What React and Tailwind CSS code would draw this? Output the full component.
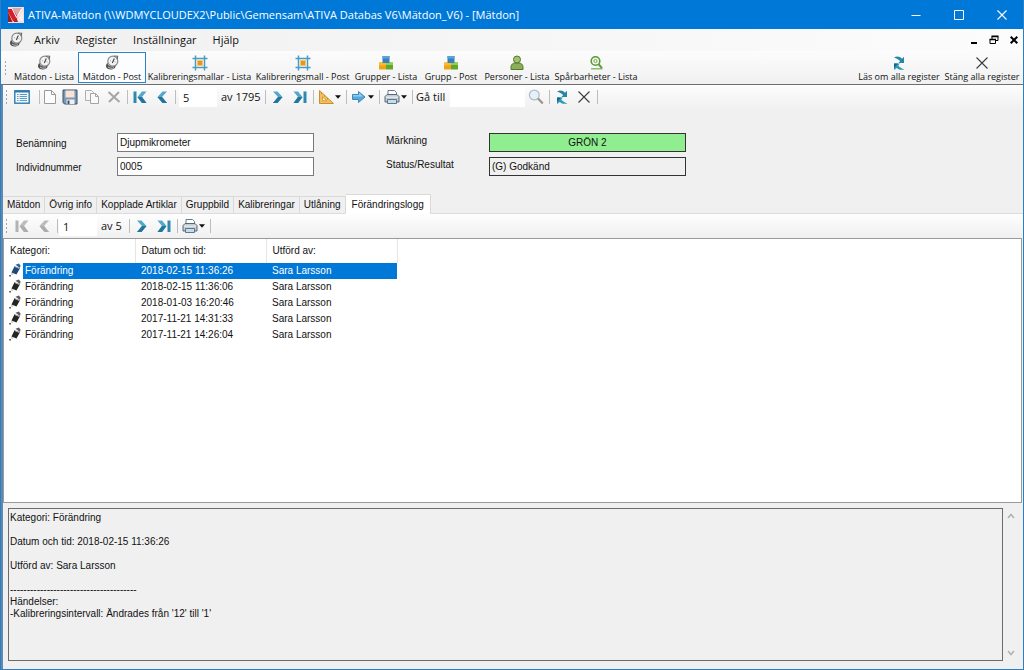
import React from "react";

const UI = "font-['Open_Sans','Noto_Sans',sans-serif]";

/* ---------- icons ---------- */

function Svg({ children, box = "0 0 16 16", className = "h-4 w-4" }) {
  return (
    <svg viewBox={box} className={`shrink-0 ${className}`} fill="none" aria-hidden="true">
      {children}
    </svg>
  );
}

const LogoIcon = () => (
  <Svg className="h-4 w-4">
    <rect width="16" height="16" fill="#f0dedc" />
    <path d="M0 2h7l3 6-2 6H5L0 5z" fill="#cf222b" />
    <path d="M0 5l4.500 10H0z" fill="#a3161d" />
    <path d="M4 1h10l-5 8z" fill="#dca9a8" />
    <path d="M4 1.500l4.500 9L14 1.500" stroke="#fff" />
    <path d="M9 14l6-10v10z" fill="#f6efee" />
    <path d="M5.500 15l3-4 1.500 4z" fill="#b91c23" />
  </Svg>
);

const GaugeIcon = () => (
  <Svg>
    <circle cx="8.800" cy="6.200" r="5" fill="#f3f3f3" stroke="#8a8a8a" strokeWidth="1.200" />
    <path d="M10 1l3.600.2-.3 3" stroke="#6d6d6d" strokeWidth="1.200" />
    <path d="M8.300 8l2-4.500" stroke="#444" strokeWidth="1.100" />
    <path d="M6 5.500l.8.5M11.500 7l-.9-.3" stroke="#888" strokeWidth=".8" />
    <path d="M3.500 7.500c-.2 2.600 2.600 4.800 6.600 4l1.400-1c.4 2-1.300 3.800-4 4-2.800.2-5.200-1-5.500-3-.1-1.500.6-2.900 1.500-4z" fill="#4f4f4f" />
    <path d="M4 12c1.500 1.200 4 1.600 6 .8" stroke="#d7d7d7" strokeWidth=".9" />
  </Svg>
);

const FrameIcon = () => (
  <Svg>
    <path d="M3.500.5v15M12.500.5v15M.5 3.500h15M.5 12.500h15" stroke="#479cc4" strokeWidth="1.500" />
    <rect x="5.500" y="5.500" width="5" height="5" fill="#e8951e" stroke="#f7c66f" />
  </Svg>
);

const BlocksIcon = () => (
  <Svg>
    <rect x="1" y="7.500" width="7" height="7" rx=".5" fill="#f0a21c" />
    <rect x="8" y="7.500" width="7" height="7" rx=".5" fill="#62a62a" />
    <path d="M1 7.500h7v3H1z" fill="#f5bd2f" />
    <path d="M8 7.500h7V10H8z" fill="#9aca4f" />
    <rect x="4.500" y="1" width="7" height="7" rx=".5" fill="#3681bd" />
    <rect x="4.500" y="1" width="7" height="2.500" fill="#5fa3d2" />
  </Svg>
);

const PersonIcon = () => (
  <Svg>
    <path d="M2 14.500V12c0-2.500 2-4 4-4h4c2 0 4 1.500 4 4v2.500z" fill="#8bae59" stroke="#55782c" />
    <circle cx="8" cy="4.500" r="3.500" fill="#a2c272" stroke="#55782c" />
  </Svg>
);

const TraceIcon = () => (
  <Svg>
    <circle cx="7.500" cy="6" r="4.300" stroke="#5b9a38" strokeWidth="1.600" fill="#f3f9ee" />
    <circle cx="7.500" cy="6" r="1.600" stroke="#74ab55" />
    <path d="M10.500 9.200l3.500 4" stroke="#5b9a38" strokeWidth="2" />
    <path d="M3 13.800h11.500" stroke="#76ad55" strokeWidth="1.200" />
  </Svg>
);

const RefreshIcon = () => (
  <Svg>
    <path d="M3 2.500c3-1.800 6-1 8 1.200l2-2V8H7.500l1.700-1.900C7.500 4.300 5.500 3.300 3 2.500z" fill="#2687a6" />
    <path d="M13.500 14.500c-3.500.7-6 .2-7.700-1.600L3 15V8.500h6l-1.800 2c1.500 1.800 3.500 3 6.300 4z" fill="#2f9ab8" />
    <path d="M3 8.500h4L3 13z" fill="#176581" />
  </Svg>
);

const ThinXIcon = () => (
  <Svg>
    <path d="M2.500 2.500l11 11M13.500 2.500l-11 11" stroke="#3c3c3c" strokeWidth="1.100" />
  </Svg>
);

const ListFormIcon = () => (
  <Svg>
    <rect x=".8" y="1.800" width="14.400" height="12.400" fill="#f4fafd" stroke="#2c7cb0" strokeWidth="1.400" />
    <path d="M1 2.500h14" stroke="#2c7cb0" strokeWidth="2" />
    <path d="M3 5.500h1.500M3 7.500h1.500M3 9.500h1.500M3 11.500h1.500M5.500 5.500H13M5.500 7.500H13M5.500 9.500H13M5.500 11.500H13" stroke="#5a9cc5" />
  </Svg>
);

const PageIcon = () => (
  <Svg>
    <path d="M2.500 1.500h7l4 4v9h-11z" fill="#fdfdfd" stroke="#9a9a9a" />
    <path d="M9.500 1.500v4h4" stroke="#9a9a9a" />
  </Svg>
);

const SaveIcon = () => (
  <Svg>
    <path d="M1 1h14v14H2.500L1 13.500z" fill="#7c97b5" stroke="#3f5368" />
    <rect x="3.500" y="1.500" width="9" height="7" fill="#f8e3d6" />
    <path d="M4.500 10.500h8V15h-8z" fill="#eef1f4" />
    <path d="M5.500 11.500h2V15h-2z" fill="#3f5368" />
  </Svg>
);

const CopyIcon = () => (
  <Svg>
    <path d="M1.500 1.500h6l2 2v8h-8z" fill="#f6f6f6" stroke="#b0b0b0" />
    <path d="M6.500 4.500h5l3 3v7h-8z" fill="#fafafa" stroke="#a5a5a5" />
    <path d="M11.500 4.500v3h3" stroke="#a5a5a5" />
  </Svg>
);

const GrayXIcon = () => (
  <Svg>
    <path d="M2.500 3l11 10M13 3L3 13" stroke="#a6a6a6" strokeWidth="2" />
  </Svg>
);

const Arrow = ({ flip = false, bar = false, muted = false }) => (
  <Svg className={`h-4 w-4 ${flip ? "-scale-x-100" : ""}`}>
    <path
      d={bar ? "M1.500 2.500H6L10.500 8 6 14H1.500L6 8z" : "M3 2.500h4.500L12.500 8l-5 6H3l5-6z"}
      fill={muted ? "#bcbcbc" : "#55a8c9"}
    />
    <path
      d={bar ? "M6 8h4.500L6 14H1.500z" : "M8 8h4.500l-5 6H3z"}
      fill={muted ? "#adadad" : "#23759b"}
    />
    {bar && <path d="M11.500 2.500h3V14h-3z" fill={muted ? "#b3b3b3" : "#2f88b0"} />}
  </Svg>
);

const RulerIcon = () => (
  <Svg>
    <path d="M1.500 1.500v13h14z" fill="#f3bf5a" stroke="#c98f30" />
    <path d="M4.500 8v3.700h4.200z" fill="#fff" stroke="#c98f30" strokeWidth=".8" />
    <path d="M4 3.800l-1 .8M7 6.500l-1 .9M10 9.300l-1 .9" stroke="#8f6113" strokeWidth=".7" />
  </Svg>
);

const GoIcon = () => (
  <Svg>
    <path d="M1.500 5.500h6V2.500L14 8l-6.500 5.500v-3h-6z" fill="#58a9dd" stroke="#3c88bb" />
    <path d="M2 6h6V3.800l4 3.700H2z" fill="#93cbee" />
  </Svg>
);

const PrintIcon = () => (
  <Svg>
    <path d="M4 6V1.500h6.500l2 2V6" fill="#fff" stroke="#68788a" />
    <path d="M1 7.500l2-2h10l2 2V13H1z" fill="#c3cbd3" stroke="#5b6977" />
    <path d="M3.500 10.500h9v4h-9z" fill="#bfe0f4" stroke="#5b6977" strokeWidth=".9" />
    <path d="M2 8.200h12" stroke="#eef2f5" />
  </Svg>
);

const SearchIcon = () => (
  <Svg>
    <circle cx="6.300" cy="6" r="4.900" fill="#e6f0f7" stroke="#b3bec8" strokeWidth="1.300" />
    <path d="M10 9.500l4.800 5" stroke="#9a9390" strokeWidth="2.200" />
  </Svg>
);

const PencilIcon = ({ selected }) => (
  <Svg className="h-4 w-4">
    <path d="M7.500 1.800L11 .5l1.500 2.300L12 5z" fill={selected ? "#2b628f" : "#5a5a5a"} />
    <path d="M6.500 3.200L12 5.300l-3.500 6.200-5-2z" fill={selected ? "#1c4a73" : "#242424"} />
    <path d="M7 3.800l4.500 1.800" stroke={selected ? "#8fbbe0" : "#d0d0d0"} strokeWidth=".8" />
    <path d="M3.300 10.200l2 .9-1.600.6z" fill="#777" />
    <path d="M1.300 12.800h1.500" stroke={selected ? "#123e66" : "#333"} strokeWidth="1.500" />
  </Svg>
);

const Caret = () => (
  <Svg box="0 0 6 4" className="h-1 w-1.5">
    <path d="M0 .3h6L3 3.700z" fill="#111" />
  </Svg>
);

/* ---------- toolbar parts ---------- */

const Grip = () => (
  <span className="ml-[3px] mr-1 flex shrink-0 flex-col gap-0.5" aria-hidden="true">
    <i className="h-0.5 w-px bg-[#a3a3a3]" />
    <i className="h-0.5 w-px bg-[#a3a3a3]" />
    <i className="h-0.5 w-px bg-[#a3a3a3]" />
    <i className="h-0.5 w-px bg-[#a3a3a3]" />
  </span>
);

const Sep = () => (
  <span className="flex w-1 shrink-0 justify-center" aria-hidden="true">
    <i className="h-3.5 w-px bg-[#bdbdbd]" />
  </span>
);

const Tool = ({ label, children, disabled, width = "w-[22px]" }) => (
  <button type="button" aria-label={label} disabled={disabled} className={`flex h-5 shrink-0 items-center justify-center ${width}`}>
    {children}
  </button>
);

const DropTool = ({ label, children }) => (
  <button type="button" aria-label={label} className="flex h-5 w-[29px] shrink-0 items-center justify-center gap-px">
    {children}
    <Caret />
  </button>
);

const BigTool = ({ icon, label, active, width }) => (
  <button
    type="button"
    className={`flex h-[31px] shrink-0 flex-col items-center border pt-0.5 ${width} ${
      active ? "border-[#2a84c9] bg-[#fbfdff]" : "border-transparent"
    }`}
  >
    {icon}
    <span className="whitespace-nowrap text-[9px] leading-3">{label}</span>
  </button>
);

/* ---------- data ---------- */

const registers = [
  { icon: <GaugeIcon />, label: "Mätdon - Lista", width: "w-[68px]" },
  { icon: <GaugeIcon />, label: "Mätdon - Post", active: true, width: "w-[68px]" },
  { icon: <FrameIcon />, label: "Kalibreringsmallar - Lista", width: "w-[107px]" },
  { icon: <FrameIcon />, label: "Kalibreringsmall - Post", width: "w-[99px]" },
  { icon: <BlocksIcon />, label: "Grupper - Lista", width: "w-[68px]" },
  { icon: <BlocksIcon />, label: "Grupp - Post", width: "w-[62px]" },
  { icon: <PersonIcon />, label: "Personer - Lista", width: "w-[70px]" },
  { icon: <TraceIcon />, label: "Spårbarheter - Lista", width: "w-[88px]" },
];

const tabs = ["Mätdon", "Övrig info", "Kopplade Artiklar", "Gruppbild", "Kalibreringar", "Utlåning", "Förändringslogg"];

const log = [
  "2018-02-15 11:36:26",
  "2018-02-15 11:36:06",
  "2018-01-03 16:20:46",
  "2017-11-21 14:31:33",
  "2017-11-21 14:26:04",
];

const details = `Kategori: Förändring

Datum och tid: 2018-02-15 11:36:26

Utförd av: Sara Larsson

--------------------------------------
Händelser:
-Kalibreringsintervall: Ändrades från '12' till '1'`;

const fieldClass = "h-[19px] w-[197px] border px-0.5";

export default function App() {
  return (
    <div className="flex min-h-screen flex-col border-x border-b border-[#2f7fc0] bg-[#f0f0f0] font-['Liberation_Sans',Arial,sans-serif] text-[10px] leading-4 text-[#111]">
      <header className={`flex h-[29px] items-center bg-[#0078d7] text-white ${UI}`}>
        <span className="ml-[7px] mr-1"><LogoIcon /></span>
        <h1 className="text-[11px] leading-4">ATIVA-Mätdon (\\WDMYCLOUDEX2\Public\Gemensam\ATIVA Databas V6\Mätdon_V6) - [Mätdon]</h1>
        <div className="ml-auto flex">
          <button type="button" aria-label="Minimera" className="flex h-7 w-[42px] items-center justify-center">
            <Svg box="0 0 10 10" className="h-2.5 w-2.5"><path d="M.5 5.500h9" stroke="#fff" /></Svg>
          </button>
          <button type="button" aria-label="Maximera" className="flex h-7 w-[43px] items-center justify-center">
            <Svg box="0 0 10 10" className="h-2.5 w-2.5"><path d="M.5.5h9v9h-9z" stroke="#fff" /></Svg>
          </button>
          <button type="button" aria-label="Stäng" className="flex h-7 w-[43px] items-center justify-center">
            <Svg box="0 0 10 10" className="h-2.5 w-2.5"><path d="M.5.5l9 9M9.500.5l-9 9" stroke="#fff" strokeWidth="1.100" /></Svg>
          </button>
        </div>
      </header>

      <nav className={`flex h-[22px] items-center bg-gradient-to-r from-[#f0f0f0] to-[#fcfcfc] text-[11px] ${UI}`}>
        <span className="ml-[7px] mr-2.5"><GaugeIcon /></span>
        <div className="flex gap-4">
          <button type="button">Arkiv</button>
          <button type="button">Register</button>
          <button type="button">Inställningar</button>
          <button type="button">Hjälp</button>
        </div>
        <div className="ml-auto flex items-center gap-[11px] pr-[5px]">
          <button type="button" aria-label="Minimera fönster">
            <Svg box="0 0 8 10" className="h-2.5 w-2"><path d="M1 8h6" stroke="#000" strokeWidth="2" /></Svg>
          </button>
          <button type="button" aria-label="Återställ fönster">
            <Svg box="0 0 10 10" className="h-2.5 w-2.5">
              <path d="M1 4.500h5.500v4H1zM3 4V1.500h6v4H7" stroke="#000" />
              <path d="M.5 4.500h6.500M2.500 1.300h7" stroke="#000" strokeWidth="1.700" />
            </Svg>
          </button>
          <button type="button" aria-label="Stäng fönster">
            <Svg box="0 0 8 8" className="h-2 w-2"><path d="M.7.7l6.600 6.600M7.300.7L.7 7.300" stroke="#000" strokeWidth="2" /></Svg>
          </button>
        </div>
      </nav>

      <div className={`flex h-[34px] items-center border-b border-[#6f6f6f] bg-gradient-to-b from-[#fcfcfc] to-[#f1f1f1] px-px ${UI}`}>
        <Grip />
        {registers.map((r) => <BigTool key={r.label} {...r} />)}
        <div className="ml-auto flex">
          <BigTool icon={<RefreshIcon />} label="Läs om alla register" width="w-[86px]" />
          <BigTool icon={<ThinXIcon />} label="Stäng alla register" width="w-[80px]" />
        </div>
      </div>

      <main className="flex flex-1 flex-col border-l-2 border-[#5e89b0]">
        <div className={`flex h-6 items-center bg-gradient-to-b from-[#fdfdfd] to-[#f0f0f0] text-[11px] ${UI}`}>
          <Grip />
          <Tool label="Visa lista"><ListFormIcon /></Tool>
          <span className="ml-1 flex"><Sep /></span>
          <Tool label="Ny" width="w-[18px]"><PageIcon /></Tool>
          <Tool label="Spara"><SaveIcon /></Tool>
          <Tool label="Kopiera"><CopyIcon /></Tool>
          <Tool label="Ta bort"><GrayXIcon /></Tool>
          <Sep />
          <Tool label="Första post"><Arrow flip bar /></Tool>
          <Tool label="Föregående post"><Arrow flip /></Tool>
          <Sep />
          <input aria-label="Post" defaultValue="5" className="ml-0.5 h-5 w-[38px] bg-white px-1" />
          <span className="w-[46px] whitespace-nowrap pl-1">av 1795</span>
          <Sep />
          <Tool label="Nästa post"><Arrow /></Tool>
          <Tool label="Sista post"><Arrow bar /></Tool>
          <Sep />
          <DropTool label="Mätning"><RulerIcon /></DropTool>
          <Sep />
          <DropTool label="Gå vidare"><GoIcon /></DropTool>
          <Sep />
          <DropTool label="Skriv ut"><PrintIcon /></DropTool>
          <Sep />
          <label htmlFor="goto" className="w-9 whitespace-nowrap pl-0.5">Gå till</label>
          <input id="goto" className="h-5 w-[75px] bg-white px-1" />
          <Tool label="Sök"><SearchIcon /></Tool>
          <Sep />
          <Tool label="Uppdatera"><RefreshIcon /></Tool>
          <Tool label="Stäng post"><ThinXIcon /></Tool>
          <Sep />
        </div>

        <form className="flex pb-[18px] pl-[13px] pt-6" onSubmit={(e) => e.preventDefault()}>
          <div className="grid grid-cols-[101px_auto] items-end gap-y-[5px]">
            <label htmlFor="name">Benämning</label>
            <input id="name" defaultValue="Djupmikrometer" className={`${fieldClass} border-[#7a7a7a] bg-white`} />
            <label htmlFor="number">Individnummer</label>
            <input id="number" defaultValue="0005" className={`${fieldClass} border-[#7a7a7a] bg-white`} />
          </div>
          <div className="ml-[72px] grid grid-cols-[103px_auto] gap-y-[5px]">
            <label htmlFor="mark">Märkning</label>
            <input id="mark" readOnly defaultValue="GRÖN 2" className={`${fieldClass} border-[#333] bg-[#90ee90] text-center`} />
            <label htmlFor="status">Status/Resultat</label>
            <input id="status" readOnly defaultValue="(G) Godkänd" className={`${fieldClass} border-[#333] bg-[#f0f0f0]`} />
          </div>
        </form>

        <div role="tablist" className="flex items-end border-b border-[#dcdcdc]">
          {tabs.map((t, i) => {
            const on = i === tabs.length - 1;
            return (
              <button
                key={t}
                type="button"
                role="tab"
                aria-selected={on}
                className={`whitespace-nowrap border-r border-t border-[#d9d9d9] ${
                  on ? "-mb-px h-[20px] bg-white px-1.5" : "h-[17px] bg-[#f0f0f0] px-1"
                }`}
              >
                {t}
              </button>
            );
          })}
        </div>

        <div className={`flex h-6 items-center bg-gradient-to-b from-[#fefefe] to-[#f0f0f0] text-[11px] ${UI}`}>
          <Grip />
          <Tool label="Första rad" disabled><Arrow flip bar muted /></Tool>
          <Tool label="Föregående rad" disabled><Arrow flip muted /></Tool>
          <Sep />
          <input aria-label="Rad" defaultValue="1" className="h-5 w-[38px] bg-white px-1" />
          <span className="w-[30px] whitespace-nowrap pl-1">av 5</span>
          <Sep />
          <Tool label="Nästa rad"><Arrow /></Tool>
          <Tool label="Sista rad"><Arrow bar /></Tool>
          <Sep />
          <DropTool label="Skriv ut logg"><PrintIcon /></DropTool>
          <Sep />
        </div>

        <section className="mr-px flex-1 border border-[#9a9a9a] bg-white">
          <table className="w-[393px] table-fixed border-collapse text-left">
            <thead>
              <tr className="h-6">
                <th className="w-[131px] border-r border-[#e5e5e5] py-0 pl-1.5 font-normal">Kategori:</th>
                <th className="w-[131px] border-r border-[#e5e5e5] py-0 pl-1.5 font-normal">Datum och tid:</th>
                <th className="w-[131px] border-r border-[#e5e5e5] py-0 pl-1.5 font-normal">Utförd av:</th>
              </tr>
            </thead>
            <tbody>
              {log.map((time, i) => {
                const hit = i === 0 ? "bg-[#0078d7] text-white" : "";
                return (
                  <tr key={time} className="h-4">
                    <td className="p-0">
                      <div className="flex">
                        <span className="w-[19px] pl-1"><PencilIcon selected={i === 0} /></span>
                        <span className={`flex-1 pl-0.5 ${hit}`}>Förändring</span>
                      </div>
                    </td>
                    <td className={`py-0 pl-1.5 pr-0 ${hit}`}>{time}</td>
                    <td className={`py-0 pl-1.5 pr-0 ${hit}`}>Sara Larsson</td>
                  </tr>
                );
              })}
            </tbody>
          </table>
        </section>

        <section className="flex pb-2 pl-[5px] pr-1 pt-[5px]">
          <textarea
            aria-label="Detaljer"
            readOnly
            rows={12}
            defaultValue={details}
            className="h-[153px] flex-1 resize-none overflow-hidden border border-[#6c6c6c] bg-[#f0f0f0] px-px pt-[3px] leading-3 outline-none"
          />
          <div className="flex w-4 flex-col items-center justify-between py-1">
            <button type="button" aria-label="Rulla upp">
              <Svg box="0 0 8 8" className="h-2 w-2"><path d="M1 6l3-3.500L7 6" stroke="#b3b0ab" strokeWidth="1.500" /></Svg>
            </button>
            <button type="button" aria-label="Rulla ned">
              <Svg box="0 0 8 8" className="h-2 w-2"><path d="M1 2l3 3.500L7 2" stroke="#b3b0ab" strokeWidth="1.500" /></Svg>
            </button>
          </div>
        </section>
      </main>
    </div>
  );
}
